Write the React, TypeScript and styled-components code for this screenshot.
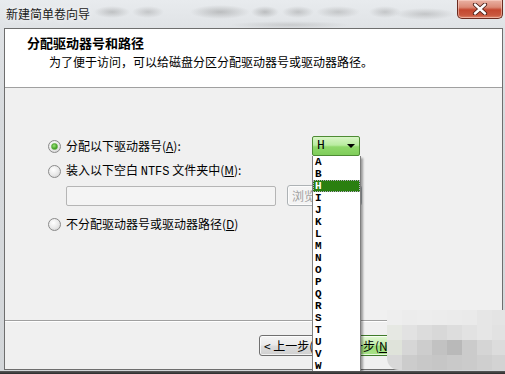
import styled, { createGlobalStyle } from "styled-components";

const GlobalStyle = createGlobalStyle`
  html, body {
    margin: 0;
    padding: 0;
    background: #2e2e2e;
  }
  body {
    font-family: "Noto Sans CJK SC", "Liberation Sans", sans-serif;
    font-size: 12px;
    color: #000;
  }
`;

const Screen = styled.div`
  width: 505px;
  height: 374px;
  overflow: hidden;
  background: #333;
  display: flex;
  flex-direction: column;
`;

const Frame = styled.div`
  height: 371px;
  flex: none;
  position: relative;
  overflow: hidden;
  display: flex;
  flex-direction: column;
  background: linear-gradient(to bottom, #e8ebee 0, #dfe2e5 30px, #d7dadd 120px, #d3d6d9 100%);
`;

const TitleBar = styled.div`
  height: 28px;
  flex: none;
  display: flex;
  align-items: flex-start;
  background:
    radial-gradient(ellipse 18px 6px at 112px 12px, rgba(120, 120, 120, 0.35), transparent),
    radial-gradient(ellipse 16px 6px at 148px 12px, rgba(120, 120, 120, 0.3), transparent),
    radial-gradient(ellipse 30px 7px at 220px 12px, rgba(110, 110, 110, 0.35), transparent),
    radial-gradient(ellipse 14px 6px at 265px 12px, rgba(110, 110, 110, 0.35), transparent),
    radial-gradient(ellipse 16px 6px at 298px 12px, rgba(110, 110, 110, 0.3), transparent),
    radial-gradient(ellipse 22px 6px at 338px 12px, rgba(120, 120, 120, 0.3), transparent),
    radial-gradient(ellipse 16px 6px at 385px 12px, rgba(120, 120, 120, 0.3), transparent),
    radial-gradient(ellipse 30px 6px at 425px 14px, rgba(120, 120, 120, 0.3), transparent),
    radial-gradient(ellipse 60px 4px at 290px 25px, rgba(130, 130, 130, 0.25), transparent);
`;

const TitleText = styled.div`
  height: 28px;
  line-height: 28px;
  padding-left: 6px;
  font-size: 12px;
  color: #1a1a1a;
  text-shadow: 0 0 6px rgba(255, 255, 255, 0.9);
`;

const CloseButton = styled.div`
  margin-left: auto;
  margin-right: 2px;
  width: 44px;
  height: 18px;
  display: flex;
  align-items: center;
  justify-content: center;
  border: 1px solid #6a2b20;
  border-top: none;
  border-radius: 0 0 5px 5px;
  background: linear-gradient(to bottom, #eab2a4 0, #db8a76 40%, #c4472f 55%, #c9583f 85%, #de8a6f 100%);
  box-shadow: inset 0 0 0 1px rgba(255, 220, 210, 0.5);
`;

const Client = styled.div`
  flex: 1;
  margin: 0 2px 1px 4px;
  border: 1px solid #6e6e6e;
  display: flex;
  flex-direction: column;
  background: #f0f0f0;
`;

const Header = styled.div`
  height: 59px;
  flex: none;
  background: #fff;
  border-bottom: 1px solid #a0a0a0;
  padding: 6px 0 0 22px;
  box-sizing: border-box;
`;

const HeaderTitle = styled.div`
  font-size: 13px;
  font-weight: bold;
  line-height: 16px;
`;

const HeaderSub = styled.div`
  font-size: 12px;
  line-height: 16px;
  padding: 3px 0 0 22px;
`;

const Body = styled.div`
  height: 233px;
  flex: none;
  box-sizing: border-box;
  padding: 48px 0 0 43px;
  border-bottom: 1px solid #a0a0a0;
  display: flex;
  flex-direction: column;
`;

const ComboRow = styled.div`
  display: flex;
  align-items: center;
  height: 20px;
`;

const Option = styled.label<{ $width?: number; $top?: number }>`
  display: flex;
  align-items: center;
  gap: 5px;
  height: 14px;
  line-height: 14px;
  white-space: nowrap;
  margin-top: ${(p) => p.$top ?? 0}px;
  width: ${(p) => (p.$width ? `${p.$width}px` : "auto")};
`;

const Radio = styled.span<{ $checked?: boolean }>`
  width: 11px;
  height: 11px;
  flex: none;
  border-radius: 50%;
  border: 1px solid #8a8a8a;
  background: radial-gradient(circle at 40% 35%, #ffffff 0, #e8e8e8 55%, #c8c8c8 100%);
  display: flex;
  align-items: center;
  justify-content: center;
  box-sizing: content-box;

  &::after {
    content: "";
    display: ${(p) => (p.$checked ? "block" : "none")};
    width: 5px;
    height: 5px;
    border-radius: 50%;
    background: radial-gradient(circle at 40% 35%, #9be37a 0, #3f9f22 70%, #2b7a14 100%);
    border: 1px solid #5cab3e;
  }
`;

const Latin = styled.span`
  font-family: "Liberation Mono", "DejaVu Sans Mono", monospace;
  font-size: 12px;
`;

const InputRow = styled.div`
  display: flex;
  align-items: center;
  margin-top: 7px;
  padding-left: 18px;
  height: 21px;
`;

const TextBox = styled.div`
  width: 208px;
  height: 18px;
  border: 1px solid #b5b5b5;
  border-radius: 2px;
  background: #f4f4f4;
`;

const Button = styled.div<{ $green?: boolean; $disabled?: boolean }>`
  width: 69px;
  height: 19px;
  padding-left: 4px;
  display: flex;
  align-items: center;
  justify-content: flex-start;
  border-radius: 3px;
  font-size: 12px;
  white-space: nowrap;
  color: ${(p) => (p.$disabled ? "#a0a0a0" : "#000")};
  border: 1px solid ${(p) => (p.$green ? "#3f7a2a" : p.$disabled ? "#adb2b5" : "#707070")};
  background: ${(p) =>
    p.$green
      ? "linear-gradient(to bottom, #e4f8d6 0, #c4eead 45%, #9ddd7a 55%, #a8e288 100%)"
      : p.$disabled
      ? "#f4f4f4"
      : "linear-gradient(to bottom, #f4f4f4 0, #ebebeb 45%, #dddddd 55%, #cfcfcf 100%)"};
  box-shadow: inset 0 0 0 1px rgba(255, 255, 255, 0.7);
`;

const BrowseButton = styled(Button)`
  margin-left: 11px;
`;

const ComboWrap = styled.div`
  position: relative;
  width: 48px;
  height: 20px;
  flex: none;
`;

const Combo = styled.div`
  width: 38px;
  height: 18px;
  border: 1px solid #4d8b33;
  border-radius: 2px;
  background: linear-gradient(to bottom, #d8f5c6 0, #b9eca0 45%, #8fd86a 55%, #7fcd5a 100%);
  display: flex;
  align-items: center;
  justify-content: space-between;
  padding: 0 4px;
  font-family: "Liberation Mono", "DejaVu Sans Mono", monospace;
  font-size: 13px;
  line-height: 18px;
`;

const Arrow = styled.span`
  width: 0;
  height: 0;
  border-left: 4px solid transparent;
  border-right: 4px solid transparent;
  border-top: 4px solid #000;
`;

const DropList = styled.div`
  position: absolute;
  top: 20px;
  left: 0;
  width: 47px;
  height: 240px;
  z-index: 5;
  background: #fff;
  border: 1px solid #808080;
  border-top: none;
  box-shadow: 2px 2px 2px rgba(0, 0, 0, 0.35);
  display: flex;
  flex-direction: column;
`;

const DropItem = styled.div<{ $selected?: boolean }>`
  height: 12px;
  flex: none;
  line-height: 12px;
  padding-left: 2px;
  font-family: "Liberation Mono", "DejaVu Sans Mono", monospace;
  font-size: 11px;
  font-weight: bold;
  color: ${(p) => (p.$selected ? "#fff" : "#000")};
  background: ${(p) => (p.$selected ? "#2a7f10" : "transparent")};
  outline: ${(p) => (p.$selected ? "1px dotted #b8a8c8" : "none")};
  outline-offset: -1px;
`;

const Footer = styled.div`
  flex: 1;
  display: flex;
  align-items: flex-start;
  justify-content: flex-end;
  padding: 13px 8px 0 0;
  border-top: 1px solid #fff;
`;

const NavGroup = styled.div`
  display: flex;
`;

const CancelButton = styled(Button)`
  margin-left: 10px;
`;

const Mosaic = styled.div`
  position: absolute;
  left: 387px;
  top: 310px;
  z-index: 6;
  display: grid;
  grid-template-columns: repeat(8, 15px);
  grid-auto-rows: 15px;
  border-bottom-left-radius: 12px;
  overflow: hidden;
`;

const Cell = styled.div<{ $c: string }>`
  background: ${(p) => p.$c};
`;

const BottomBar = styled.div`
  flex: 1;
  background: linear-gradient(to bottom, #5a5a5a, #2a2a2a);
`;

const letters = ["A", "B", "H", "I", "J", "K", "L", "M", "N", "O", "P", "Q", "R", "S", "T", "U", "V", "W"];

const mosaic = [
  "#eeeeee", "#ececec", "#ededed", "#ececec", "#ebebeb", "#eaeaea", "#e6e6e6", "#e4e4e4",
  "#e6e8e3", "#e2e2e2", "#dcdcdc", "#d8d8d8", "#dddddd", "#e2e2e2", "#e6e6e6", "#e2e2e2",
  "#dfe3da", "#d6d6d6", "#cdcdcd", "#c2c2c2", "#b9b9b9", "#cbcbcb", "#d5d5d5", "#dcdcdc",
  "#d8d8d8", "#cccccc", "#c8c8c8", "#c6c6c6", "#c9c9c9", "#cbcbcb", "#cfcfcf", "#d3d3d3",
];

function CloseIcon() {
  return (
    <svg width="16" height="12" viewBox="0 0 16 12">
      <path d="M3 1.5 L13 10.5 M13 1.5 L3 10.5" stroke="#4a1e16" strokeWidth="4.2" strokeLinecap="round" />
      <path d="M3 1.5 L13 10.5 M13 1.5 L3 10.5" stroke="#fff" strokeWidth="2.4" strokeLinecap="round" />
    </svg>
  );
}

export default function App() {
  return (
    <Screen>
      <GlobalStyle />
      <Frame>
        <TitleBar>
          <TitleText>新建简单卷向导</TitleText>
          <CloseButton>
            <CloseIcon />
          </CloseButton>
        </TitleBar>
        <Client>
          <Header>
            <HeaderTitle>分配驱动器号和路径</HeaderTitle>
            <HeaderSub>为了便于访问，可以给磁盘分区分配驱动器号或驱动器路径。</HeaderSub>
          </Header>
          <Body>
            <ComboRow>
              <Option $width={264}>
                <Radio $checked />
                <span>
                  分配以下驱动器号(<u>A</u>):
                </span>
              </Option>
              <ComboWrap>
                <Combo>
                  <span>H</span>
                  <Arrow />
                </Combo>
                <DropList>
                  {letters.map((l) => (
                    <DropItem key={l} $selected={l === "H"}>
                      {l}
                    </DropItem>
                  ))}
                </DropList>
              </ComboWrap>
            </ComboRow>
            <Option $top={8}>
              <Radio />
              <span>
                装入以下空白 <Latin>NTFS</Latin> 文件夹中(<u>M</u>):
              </span>
            </Option>
            <InputRow>
              <TextBox />
              <BrowseButton $disabled>浏览(R)...</BrowseButton>
            </InputRow>
            <Option $top={11}>
              <Radio />
              <span>
                不分配驱动器号或驱动器路径(<u>D</u>)
              </span>
            </Option>
          </Body>
          <Footer>
            <NavGroup>
              <Button>&lt; 上一步(<u>B</u>)</Button>
              <Button $green>下一步(<u>N</u>) &gt;</Button>
            </NavGroup>
            <CancelButton>取消</CancelButton>
          </Footer>
        </Client>
        <Mosaic>
          {mosaic.map((c, i) => (
            <Cell key={i} $c={c} />
          ))}
        </Mosaic>
      </Frame>
      <BottomBar />
    </Screen>
  );
}
